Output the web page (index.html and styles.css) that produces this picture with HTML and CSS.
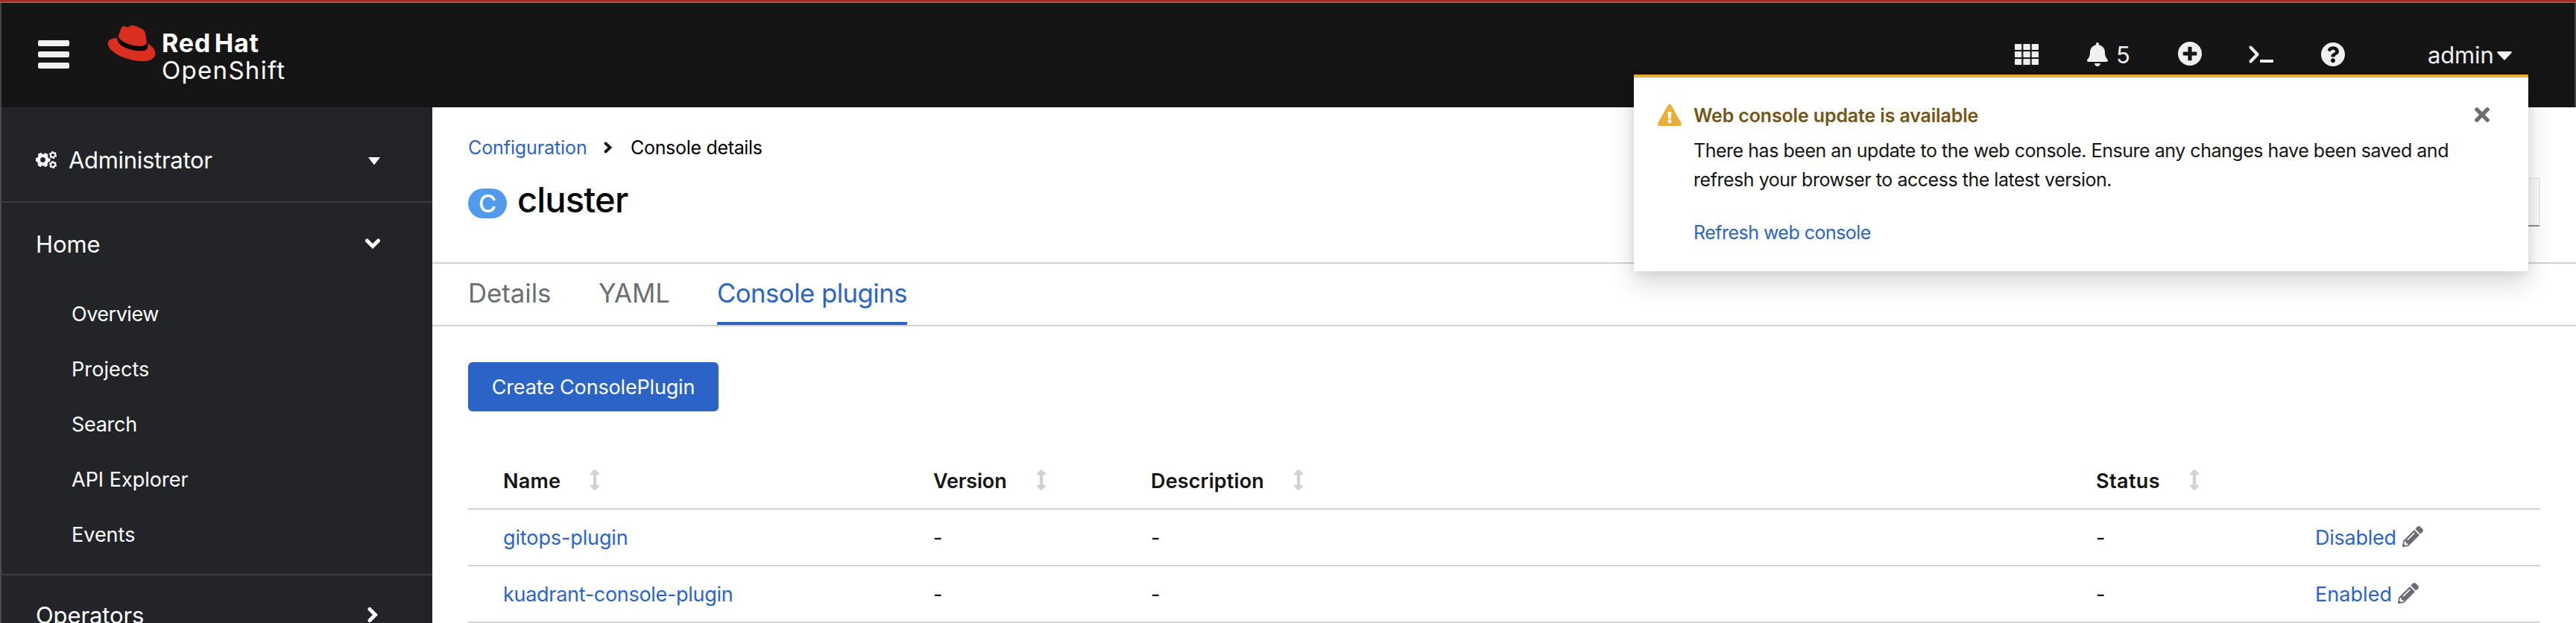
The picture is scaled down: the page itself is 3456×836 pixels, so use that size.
FILE: index.html
```html
<!DOCTYPE html>
<html lang="en">
<head>
<meta charset="utf-8">
<title>cluster · Console plugins · Red Hat OpenShift</title>
<link rel="stylesheet" href="styles.css">
</head>
<body>
<svg class="defs" aria-hidden="true">
  <symbol id="sort" viewBox="0 0 256 512"><path d="M214.059 377.941H168V134.059h46.059c21.382 0 32.09-25.851 16.971-40.971L144.971 7.029c-9.373-9.373-24.568-9.373-33.941 0L24.971 93.088c-15.119 15.119-4.411 40.971 16.971 40.971H88v243.882H41.941c-21.382 0-32.09 25.851-16.971 40.971l86.059 86.059c9.373 9.373 24.568 9.373 33.941 0l86.059-86.059c15.12-15.119 4.412-40.971-16.97-40.971z"/></symbol>
  <symbol id="pencil" viewBox="0 0 512 512"><path d="M497.9 142.1l-46.1 46.1c-4.7 4.7-12.3 4.7-17 0l-111-111c-4.7-4.7-4.7-12.3 0-17l46.1-46.1c18.7-18.7 49.1-18.7 67.9 0l60.1 60.1c18.8 18.7 18.8 49.1 0 67.9zM284.2 99.8L21.6 362.4.4 483.9c-2.9 16.4 11.4 30.6 27.8 27.8l121.5-21.3 262.6-262.6c4.7-4.7 4.7-12.3 0-17l-111-111c-4.8-4.7-12.4-4.7-17.1 0zM124.1 339.9c-5.5-5.5-5.5-14.3 0-19.8l154-154c5.5-5.5 14.3-5.5 19.8 0s5.5 14.3 0 19.8l-154 154c-5.5 5.5-14.3 5.5-19.8 0zM88 424h48v36.3l-64.5 11.3-31.1-31.1L51.7 376H88v48z"/></symbol>
</svg>
<div class="page">
  <header class="masthead">
    <button class="hamburger" aria-label="Toggle navigation"><i></i><i></i><i></i></button>
    <a class="brand">
      <svg class="hat" viewBox="310 40 196 148"><path fill="#da2e20" d="M352 94L364 58Q369 44 379 45Q388 50 396 49Q402 41 412 42Q440 47 460 64L464 74L470 113C498 127 507 148 503 162C496 185 465 188 440 186C378 181 312 148 312 113C313 98 332 93 352 94Z"/><path d="M354 87C350 95 350 100 352 106C365 134 425 150 458 144C472 141 474 131 474 120L469 112C466 123 455 127 440 126C405 125 362 108 354 87Z"/></svg>
      <span class="brand-text"><b>Red Hat</b><span>OpenShift</span></span>
    </a>
    <nav class="tools">
      <svg class="t-grid" viewBox="0 0 32 28"><g><rect width="9.3" height="8" rx="1"/><rect x="11.4" width="9.3" height="8" rx="1"/><rect x="22.7" width="9.3" height="8" rx="1"/><rect y="10" width="9.3" height="8" rx="1"/><rect x="11.4" y="10" width="9.3" height="8" rx="1"/><rect x="22.7" y="10" width="9.3" height="8" rx="1"/><rect y="20" width="9.3" height="8" rx="1"/><rect x="11.4" y="20" width="9.3" height="8" rx="1"/><rect x="22.7" y="20" width="9.3" height="8" rx="1"/></g></svg>
      <svg class="t-bell" viewBox="0 0 448 512"><path d="M224 512c35.32 0 63.97-28.65 63.97-64H160.03c0 35.35 28.65 64 63.97 64zm215.39-149.71c-19.32-20.76-55.47-51.99-55.47-154.29 0-77.7-54.48-139.9-127.94-155.16V32c0-17.67-14.32-32-31.98-32s-31.98 14.33-31.98 32v20.84C118.56 68.1 64.08 130.3 64.08 208c0 102.3-36.15 133.53-55.47 154.29-6 6.45-8.66 14.16-8.61 21.71.11 16.4 12.98 32 32.1 32h383.8c19.12 0 32-15.6 32.1-32 .05-7.55-2.61-15.27-8.61-21.71z"/></svg>
      <span class="t-count">5</span>
      <svg class="t-plus" viewBox="8 8 496 496"><path d="M256 8C119 8 8 119 8 256s111 248 248 248 248-111 248-248S393 8 256 8zm144 276c0 6.6-5.4 12-12 12h-92v92c0 6.600-5.400 12-12 12h-56c-6.600 0-12-5.400-12-12v-92h-92c-6.600 0-12-5.400-12-12v-56c0-6.600 5.400-12 12-12h92v-92c0-6.600 5.400-12 12-12h56c6.600 0 12 5.400 12 12v92h92c6.600 0 12 5.400 12 12v56z"/></svg>
      <svg class="t-prompt" viewBox="0 0 34 24"><path d="M2.500 2.500L11.500 12L2.500 21.500" fill="none" stroke="#f0f0f0" stroke-width="4" stroke-linecap="round" stroke-linejoin="round"/><rect x="15" y="19" width="18" height="4" rx="1"/></svg>
      <svg class="t-help" viewBox="8 8 496 496"><path d="M504 256c0 136.997-111.043 248-248 248S8 392.997 8 256C8 119.083 119.043 8 256 8s248 111.083 248 248zM262.655 90c-54.497 0-89.255 22.957-116.549 63.758-3.536 5.286-2.353 12.415 2.715 16.258l34.699 26.31c5.205 3.947 12.621 3.008 16.665-2.122 17.864-22.658 30.113-35.797 57.303-35.797 20.429 0 45.698 13.148 45.698 32.958 0 14.976-12.363 22.667-32.534 33.976C247.128 238.528 216 254.941 216 296v4c0 6.627 5.373 12 12 12h56c6.627 0 12-5.373 12-12v-1.333c0-28.462 83.186-29.647 83.186-106.667 0-58.002-60.165-102-116.531-102zM256 338c-25.365 0-46 20.635-46 46 0 25.364 20.635 46 46 46s46-20.636 46-46c0-25.365-20.635-46-46-46z"/></svg>
      <span class="t-user">admin</span>
      <svg class="t-caret" viewBox="0 0 20 12"><path d="M1 0H19Q20.500 .8 19.500 2L11 11Q10 12 9 11L.5 2Q-.5 .8 1 0Z"/></svg>
    </nav>
  </header>
  <div class="body">
    <aside class="sidebar">
      <div class="perspective">
        <svg class="cogs" viewBox="0 0 28 23"><g fill="none" stroke="#fff"><circle cx="9.500" cy="11.500" r="5.700" stroke-width="4.600"/><circle cx="9.500" cy="11.500" r="8.500" stroke-width="3" stroke-dasharray="4.700 4.200" stroke-dashoffset="2.300"/><circle cx="23" cy="5" r="3" stroke-width="2"/><circle cx="23" cy="5" r="4.300" stroke-width="1.600" stroke-dasharray="2.500 2"/><circle cx="23" cy="18" r="3" stroke-width="2"/><circle cx="23" cy="18" r="4.300" stroke-width="1.600" stroke-dasharray="2.500 2"/></g></svg>
        <span>Administrator</span>
        <svg class="caret" viewBox="0 0 16 10"><path fill="#fff" d="M0 0H16L8.800 9.500Q8 10.300 7.200 9.500Z"/></svg>
      </div>
      <div class="group">
        <span class="g-home">Home</span>
        <svg class="chev" viewBox="0 0 22 14"><path d="M3.500 3L11 10.500L18.500 3" fill="none" stroke="#fff" stroke-width="5" stroke-linecap="round"/></svg>
      </div>
      <ul class="items">
        <li class="i1">Overview</li><li class="i2">Projects</li><li class="i3">Search</li><li class="i4">API Explorer</li><li class="i5">Events</li>
      </ul>
      <div class="group operators">
        <span>Operators</span>
        <svg class="chev-r" viewBox="0 0 14 22"><path d="M3 3.500L10.500 11L3 18.500" fill="none" stroke="#fff" stroke-width="5" stroke-linecap="round"/></svg>
      </div>
    </aside>
    <main class="main">
      <section class="head">
        <div class="crumbs">
          <a class="c1">Configuration</a>
          <svg viewBox="0 0 12 16"><path d="M2.500 2.500L8.500 8L2.500 13.500" fill="none" stroke="#151515" stroke-width="3.800" stroke-linecap="round"/></svg>
          <span class="c2">Console details</span>
        </div>
        <div class="title-row">
          <span class="badge">C</span>
          <h1>cluster</h1>
          <span class="actions"></span>
        </div>
      </section>
      <nav class="tabs">
        <a class="tab1">Details</a><a class="tab2">YAML</a><a class="tab3 active">Console plugins</a>
      </nav>
      <section class="content">
        <button class="create">Create ConsolePlugin</button>
        <div class="table">
          <div class="row th">
            <span class="h1c">Name<svg><use href="#sort"/></svg></span>
            <span class="h2c">Version<svg><use href="#sort"/></svg></span>
            <span class="h3c">Description<svg><use href="#sort"/></svg></span>
            <span class="h4c">Status<svg><use href="#sort"/></svg></span>
            <span></span>
          </div>
          <div class="row">
            <a class="gitops">gitops-plugin</a><span>-</span><span>-</span><span>-</span>
            <a class="state dis">Disabled<svg><use href="#pencil"/></svg></a>
          </div>
          <div class="row">
            <a class="kuadrant">kuadrant-console-plugin</a><span>-</span><span>-</span><span>-</span>
            <a class="state en">Enabled<svg><use href="#pencil"/></svg></a>
          </div>
        </div>
      </section>
    </main>
  </div>
  <div class="toast" role="alert">
    <svg class="warn" viewBox="0 0 576 512" preserveAspectRatio="none"><path d="M569.517 440.013C587.975 472.007 564.806 512 527.94 512H48.054c-36.937 0-59.999-40.055-41.577-71.987L246.423 23.985c18.467-32.009 64.72-31.951 83.154 0l239.94 416.028zM288 354c-25.405 0-46 20.595-46 46s20.595 46 46 46 46-20.595 46-46-20.595-46-46-46zm-43.673-165.346l7.418 136c.347 6.364 5.609 11.346 11.982 11.346h48.546c6.373 0 11.635-4.982 11.982-11.346l7.418-136c.375-6.874-5.098-12.654-11.982-12.654h-63.383c-6.884 0-12.356 5.78-11.981 12.654z"/></svg>
    <div class="toast-body">
      <h2>Web console update is available</h2>
      <p>There has been an update to the web console. Ensure any changes have been saved and<br>refresh your browser to access the latest version.</p>
      <a>Refresh web console</a>
    </div>
    <svg class="close" viewBox="0 80 352 352"><path d="M242.72 256l100.07-100.07c12.28-12.28 12.28-32.19 0-44.48l-22.24-22.24c-12.28-12.28-32.19-12.28-44.48 0L176 189.28 75.93 89.21c-12.28-12.28-32.19-12.28-44.48 0L9.21 111.45c-12.28 12.28-12.28 32.19 0 44.48L109.28 256 9.21 356.07c-12.28 12.28-12.28 32.19 0 44.48l22.24 22.24c12.28 12.28 32.2 12.28 44.48 0L176 322.72l100.07 100.07c12.28 12.28 32.2 12.28 44.48 0l22.24-22.24c12.28-12.28 12.28-32.19 0-44.48L242.72 256z"/></svg>
  </div>
</div>
</body>
</html>
```
FILE: styles.css
```css
* { box-sizing: border-box; }
body { margin: 0; overflow: hidden; background: #fff; color: #151515; font-family: Inter, "Open Sans", sans-serif; font-size: 27px; }
button { font: inherit; border: 0; padding: 0; }
svg { display: block; flex: none; }
span, a, li, h1, h2, p { white-space: nowrap; }
.defs { position: absolute; width: 0; height: 0; }
.page { position: relative; width: 3456px; height: 836px; display: flex; flex-direction: column; overflow: hidden; }

/* Masthead */
.masthead { flex: none; height: 144px; display: flex; align-items: flex-start; background: #151515; border-top: 2px solid #9b2a25; color: #f0f0f0; box-shadow: inset 0 2px #b0514d, inset 2px 0 #434343, inset -2px 0 #434343; }
.hamburger { display: grid; gap: 7px; width: 42px; margin: 52px 0 0 51px; background: none; }
.hamburger i { height: 8px; border-radius: 2px; background: #f0f0f0; }
.brand { display: flex; margin-left: 51px; color: #fff; }
.hat { width: 65px; height: 50px; margin-top: 31px; }
.brand-text { display: grid; margin: 38px 0 0 7px; font-size: 33px; line-height: 36px; }
.brand-text b { font-size: 34px; letter-spacing: .8px; word-spacing: -4px; padding-left: 1px; }
.brand-text span { letter-spacing: 1.3px; padding-left: 1px; }
.tools { display: flex; align-items: center; height: 142px; margin-left: auto; padding-right: 86px; font-size: 31px; fill: #f0f0f0; }
.t-grid { width: 32px; height: 28px; }
.t-bell { width: 28px; height: 32px; margin-left: 65px; }
.t-count { width: 19px; margin-left: 11px; line-height: 40px; margin-top: 2px; }
.t-plus { width: 32px; height: 32px; margin: -2px 0 0 64px; }
.t-prompt { width: 34px; height: 24px; margin-left: 63px; }
.t-help { width: 32px; height: 32px; margin-left: 63px; }
.t-user { width: 87px; margin-left: 111px; margin-top: 2px; line-height: 40px; letter-spacing: -.15px; }
.t-caret { width: 20px; height: 12px; margin: 4px 0 0 6px; }

/* Sidebar */
.body { flex: 1; display: flex; min-height: 0; }
.sidebar { flex: none; width: 580px; background: #232428; color: #fff; font-size: 31px; box-shadow: inset 2px 0 #4b4c4f; }
.perspective { display: flex; align-items: center; height: 128px; padding: 15px 70px 0 48px; border-bottom: 2px solid #3c3f42; letter-spacing: -.3px; }
.cogs { width: 28px; height: 23px; margin-right: 16px; }
.caret { width: 16px; height: 10px; margin: 3px 0 0 auto; }
.group { display: flex; align-items: center; justify-content: space-between; height: 112px; padding: 0 69px 2px 48px; letter-spacing: -.12px; }
.chev { width: 22px; height: 14px; }
.chev-r { width: 14px; height: 22px; margin-right: 4px; }
.items { margin: 0; padding: 1px 0 15px 96px; list-style: none; font-size: 27px; line-height: 74px; border-bottom: 2px solid #3c3f42; }
.i1 { letter-spacing: -.49px; }
.i2 { letter-spacing: .1px; }
.i3 { letter-spacing: -.3px; }
.i4 { letter-spacing: 0; }
.operators { height: 108px; }

/* Main */
.main { flex: 1; }
a { color: #2b64c6; }
.head { height: 210px; padding: 34px 48px 0; border-bottom: 2px solid #d2d2d2; }
.crumbs { display: flex; align-items: center; height: 40px; font-size: 25px; }
.crumbs svg { width: 12px; height: 16px; margin: 0 24px 0 22px; }
.c1 { width: 160px; letter-spacing: -.1px; }
.c2 { color: #000; letter-spacing: -.31px; }
.title-row { display: flex; align-items: flex-start; margin-top: 20px; }
.badge { width: 52px; height: 40px; margin-top: 15px; border-radius: 20px; background: #519aec; color: #fff; font-size: 33px; font-weight: 500; line-height: 40px; text-align: center; }
h1 { margin: 0 0 0 14px; font-size: 47px; line-height: 60px; font-weight: 500; letter-spacing: -.8px; color: #000; }
.actions { width: 300px; height: 66px; margin-left: auto; background: #fafafa; border: 2px solid #ededed; border-bottom-color: #8a8d90; }
.tabs { display: flex; gap: 64px; height: 84px; padding: 0 48px; border-bottom: 2px solid #d2d2d2; font-size: 34.7px; line-height: 78px; }
.tabs a { height: 82px; color: #6a6e73; }
.tab1 { width: 111px; letter-spacing: 0; }
.tab2 { width: 95px; }
.tabs .active { width: 255px; color: #2b64c6; border-bottom: 4px solid #2b64c6; letter-spacing: -.52px; }
.content { padding: 48px 48px 0; }
.create { width: 336px; height: 66px; border-radius: 6px; background: #2b64c6; color: #fff; letter-spacing: -.17px; }
.table { margin-top: 56px; }
.row { display: grid; grid-template-columns: 624px 292px 1268px 294px 1fr; align-items: center; height: 76px; border-bottom: 2px solid #d2d2d2; }
.row > :first-child { padding-left: 47px; }
.th { font-weight: 600; }
.th span { display: flex; align-items: center; }
.th svg { width: 14px; height: 28px; fill: #d2d2d2; margin: 0 0 2px 39px; }
.h1c { letter-spacing: .26px; }
.h2c { letter-spacing: -.16px; }
.h3c { letter-spacing: .13px; }
.h4c { letter-spacing: .4px; }
.gitops { letter-spacing: -.12px; }
.kuadrant { letter-spacing: -.3px; }
.state { display: flex; align-items: center; }
.state svg { width: 28px; height: 28px; margin: 0 0 2px 8px; fill: #6a6e73; }
.dis { letter-spacing: -.25px; }
.en { letter-spacing: .05px; }

/* Toast alert */
.toast { position: absolute; left: 2192px; top: 100px; width: 1200px; height: 264px; display: flex; align-items: flex-start; padding: 34px 52px 0 32px; background: #fff; border-top: 4px solid #e8ae38; box-shadow: 0 16px 32px rgba(3, 3, 3, .16), 0 0 12px rgba(3, 3, 3, .08); font-size: 25px; }
.warn { width: 32px; height: 29px; margin-top: 2px; fill: #e8ae38; }
.toast-body { flex: 1; margin: 1px 0 0 16px; }
h2 { margin: 0; font-size: 25px; line-height: 32px; font-weight: 600; letter-spacing: -.15px; color: #755518; }
p { margin: 12px 0 0; line-height: 39px; letter-spacing: -.47px; }
.toast a { display: block; margin-top: 32px; line-height: 39px; letter-spacing: -.53px; }
.close { width: 20px; height: 20px; margin-top: 6px; fill: #6a6e73; }
```
